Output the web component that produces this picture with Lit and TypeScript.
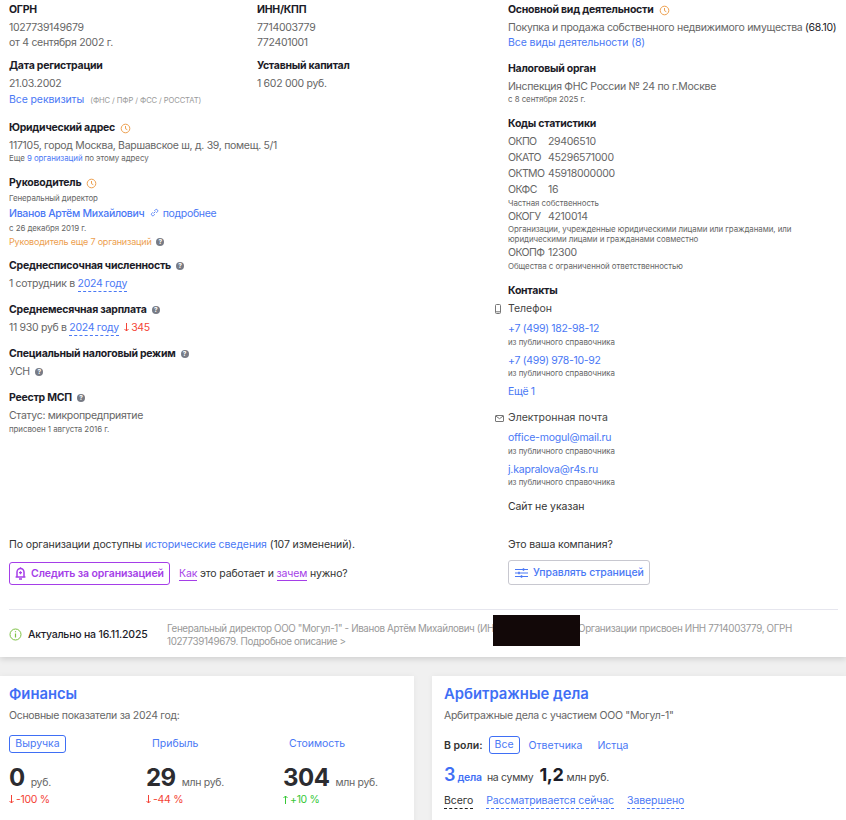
import { LitElement, html, svg, css } from "lit";
import { customElement } from "lit/decorators.js";

const clock = html`<svg class="ico" width="11" height="11" viewBox="0 0 11 11" fill="none" stroke="#eda04f" stroke-width="1"><circle cx="5.5" cy="5.5" r="4.3"/><path d="M5.5 3v2.7l1.8 1"/></svg>`;
const help = html`<span class="help">?</span>`;

// the arrow glyphs of Inter are too wide next to these small figures
const arrow = (up: boolean, color: string) => html`<svg class="arrow" width="5" height="9" viewBox="0 0 5 9" fill="none" stroke=${color} stroke-width="1">${up
  ? svg`<path d="M2.5 9V1M.5 3l2-2 2 2"/>`
  : svg`<path d="M2.5 0v8M.5 6l2 2 2-2"/>`}</svg>`;

@customElement("app-root")
export class AppRoot extends LitElement {
  static styles = css`
    :host {
      display: block;
      height: 820px;
      overflow: hidden;
      background: #f0f0f0;
      font-family: Inter, "Noto Sans", sans-serif;
      font-size: 10.5px;
      letter-spacing: -0.3px;
      color: #666;
    }
    a { color: #4a78f5; text-decoration: none; }
    .top {
      height: 657px;
      padding: 2px 8px 0 9px;
      box-sizing: border-box;
      background: #fff;
      box-shadow: 0 2px 6px rgba(0, 0, 0, 0.14);
    }
    .cols { display: grid; grid-template-columns: 499px 1fr; }
    .reqs { display: grid; grid-template-columns: 248px 1fr; }
    .h { font-size: 10.5px; line-height: 16px; font-weight: 700; letter-spacing: -0.25px; color: #1c1c28; display: flex; align-items: center; gap: 5px; }
    .v { line-height: 14px; margin-top: 3px; white-space: nowrap; }
    .s { font-size: 7.9px; line-height: 10px; letter-spacing: -0.05px; white-space: nowrap; color: #666; }
    .ico { flex: none; }
    .arrow { margin-right: 2px; vertical-align: -1px; }
    .help {
      display: inline-flex;
      align-items: center;
      justify-content: center;
      width: 8px;
      height: 8px;
      border-radius: 50%;
      background: #777b85;
      color: #fff;
      font-size: 6.5px;
      font-weight: 700;
      line-height: 8px;
      vertical-align: 1px;
    }
    .m1 { margin-top: 1px; }
    .m2 { margin-top: 2px; }
    .m4 { margin-top: 4px; }
    .m5 { margin-top: 5px; }
    .m7 { margin-top: 7px; }
    .m8 { margin-top: 8px; }
    .m11 { margin-top: 11px; }
    .m12 { margin-top: 12px; }
    .lk { letter-spacing: -0.1px; }
    .mail { letter-spacing: -0.2px; }
    .dash { border-bottom: 1px dashed #4a78f5; padding-bottom: 1px; }
    .dark { color: #1c1c28; }
    .grey { color: #999; font-size: 7.6px; letter-spacing: -0.1px; margin-left: 6px; }
    .orange { color: #eda04f; font-size: 9px; letter-spacing: -0.2px; }
    .red { color: #f44336; }
    .green { color: #37c837; }
    .code { display: grid; grid-template-columns: 40px 1fr; line-height: 14px; margin-top: 2px; }
    .code.first { margin-top: 3px; }
    .code span:first-child { letter-spacing: -0.6px; }
    .sub { line-height: 16px; letter-spacing: 0; color: #444; display: flex; align-items: center; position: relative; }
    .sub svg { position: absolute; left: -13px; }
    .actions { display: grid; grid-template-columns: 499px 1fr; margin-top: 22px; }
    .q { line-height: 16px; letter-spacing: -0.1px; color: #333; }
    .follow-row { display: flex; align-items: center; gap: 9px; margin-top: 9px; color: #333; letter-spacing: -0.15px; }
    .follow {
      display: flex;
      align-items: center;
      gap: 5px;
      height: 23px;
      width: 161px;
      box-sizing: border-box;
      padding-left: 5px;
      border: 1px solid #a53ee8;
      border-radius: 3px;
      color: #a53ee8;
      font-weight: 600;
      letter-spacing: -0.1px;
      white-space: nowrap;
    }
    .pu { color: #a53ee8; border-bottom: 1px solid #a53ee8; }
    .manage {
      display: flex;
      align-items: center;
      gap: 5px;
      height: 25px;
      width: 142px;
      box-sizing: border-box;
      margin-top: 7px;
      padding-left: 6px;
      border: 1px solid #c8c8d0;
      border-radius: 3px;
      color: #4a78f5;
      font-weight: 500;
      letter-spacing: -0.1px;
      white-space: nowrap;
    }
    .foot {
      display: flex;
      align-items: center;
      position: relative;
      margin-top: 24px;
      height: 48px;
      border-top: 1px solid #e6e6ee;
    }
    .actual { display: flex; align-items: center; gap: 6px; width: 158px; color: #1c1c28; font-weight: 500; letter-spacing: -0.2px; flex: none; }
    .desc { color: #999; line-height: 13px; padding-top: 1px; font-size: 9.8px; letter-spacing: -0.35px; white-space: nowrap; }
    .gap { display: inline-block; width: 84px; }
    .mask { position: absolute; left: 484px; top: 5px; width: 87px; height: 31px; background: #120808; }
    .cards { display: grid; grid-template-columns: 414px 414px; gap: 18px; margin-top: 19px; }
    .card { background: #fff; height: 200px; padding: 9px 12px; box-sizing: border-box; box-shadow: 0 0 6px rgba(0, 0, 0, 0.05); }
    .card.fin { padding-left: 9px; }
    .title { font-size: 14.8px; line-height: 18px; font-weight: 600; letter-spacing: 0; color: #3f6ff5; }
    .desc2 { line-height: 14px; margin-top: 6px; }
    .tabs { display: grid; grid-template-columns: 137px 137px 1fr; margin-top: 12px; height: 18px; align-items: center; }
    .tab { color: #4a78f5; line-height: 16px; letter-spacing: 0; }
    .tab.on { border: 1px solid #3f6ff5; border-radius: 3px; width: 57px; height: 18px; box-sizing: border-box; text-align: center; }
    .tab.off { padding-left: 6px; }
    .nums { display: grid; grid-template-columns: 137px 137px 1fr; margin-top: 11px; }
    .big { font-size: 24px; line-height: 28px; font-weight: 700; letter-spacing: -0.5px; color: #2c2c30; }
    .unit { margin-left: 6px; }
    .pct { line-height: 14px; margin-top: 1px; }
    .role { display: flex; align-items: center; margin-top: 13px; height: 18px; letter-spacing: 0; }
    .role b { font-weight: 600; color: #333; margin-right: 6px; }
    .role .on { border: 1px solid #3f6ff5; border-radius: 3px; width: 31px; height: 18px; box-sizing: border-box; text-align: center; line-height: 16px; color: #4a78f5; margin-right: 9px; }
    .role a { margin-right: 15px; }
    .cases { display: flex; align-items: baseline; margin-top: 9px; line-height: 24px; color: #444; }
    .n { font-size: 18px; font-weight: 700; }
    .cases .blue { color: #3f6ff5; font-weight: 600; }
    .cases .n.d { color: #1c1c28; margin: 0 3px 0 6px; }
    .stat { display: flex; gap: 13px; margin-top: 4px; line-height: 14px; letter-spacing: -0.1px; }
    .stat .all { color: #333; border-bottom: 1px dashed #222; }
    .stat a { border-bottom: 1px dashed #4a78f5; }
  `;

  render() {
    return html`
      <div class="top">
        <div class="cols">
          <div>
            <div class="reqs">
              <div>
                <div class="h">ОГРН</div>
                <div class="v">1027739149679</div>
                <div class="v m1">от 4 сентября 2002 г.</div>
              </div>
              <div>
                <div class="h">ИНН/КПП</div>
                <div class="v">7714003779</div>
                <div class="v m1">772401001</div>
              </div>
              <div class="m8">
                <div class="h">Дата регистрации</div>
                <div class="v">21.03.2002</div>
                <div class="v m2"><a class="lk" href="#">Все реквизиты</a><span class="grey">(ФНС / ПФР / ФСС / РОССТАТ)</span></div>
              </div>
              <div class="m8">
                <div class="h">Уставный капитал</div>
                <div class="v">1 602 000 руб.</div>
              </div>
            </div>

            <div class="h m12">Юридический адрес ${clock}</div>
            <div class="v">117105, город Москва, Варшавское ш, д. 39, помещ. 5/1</div>
            <div class="s">Еще <a href="#">9 организаций</a> по этому адресу</div>

            <div class="h m12">Руководитель ${clock}</div>
            <div class="s m2">Генеральный директор</div>
            <div class="v m4">
              <a href="#" style="font-weight:500">Иванов Артём Михайлович</a>
              <svg width="9" height="9" viewBox="0 0 10 10" fill="none" stroke="#4a78f5" stroke-width="1" style="margin:0 1px 0 3px"><path d="M4 6l2-2M3.2 4.8L1.8 6.2a1.6 1.6 0 0 0 2.2 2.2l1.4-1.4M4.8 3.2l1.4-1.4a1.6 1.6 0 0 1 2.2 2.2L7 5.4"/></svg>
              <a href="#">подробнее</a>
            </div>
            <div class="s m2">с 26 декабря 2019 г.</div>
            <div class="s m4 orange">Руководитель еще 7 организаций &nbsp;${help}</div>

            <div class="h m11">Среднесписочная численность ${help}</div>
            <div class="v">1 сотрудник в <a class="dash" href="#">2024 году</a></div>

            <div class="h m11">Среднемесячная зарплата ${help}</div>
            <div class="v">11 930 руб в <a class="dash" href="#">2024 году</a> &nbsp;<span class="red">${arrow(false, "#f44336")}345</span></div>

            <div class="h m11">Специальный налоговый режим ${help}</div>
            <div class="v">УСН &nbsp;${help}</div>

            <div class="h m11">Реестр МСП ${help}</div>
            <div class="v">Статус: микропредприятие</div>
            <div class="s m1">присвоен 1 августа 2016 г.</div>
          </div>

          <div>
            <div class="h">Основной вид деятельности ${clock}</div>
            <div class="v">Покупка и продажа собственного недвижимого имущества <span class="dark">(68.10)</span></div>
            <div class="v m1"><a class="lk" href="#">Все виды деятельности (8)</a></div>

            <div class="h m11">Налоговый орган</div>
            <div class="v">Инспекция ФНС России № 24 по г.Москве</div>
            <div class="s">с 8 сентября 2025 г.</div>

            <div class="h m12">Коды статистики</div>
            <div class="code first"><span>ОКПО</span><span>29406510</span></div>
            <div class="code"><span>ОКАТО</span><span>45296571000</span></div>
            <div class="code"><span>ОКТМО</span><span>45918000000</span></div>
            <div class="code"><span>ОКФС</span><span>16</span></div>
            <div class="s m1">Частная собственность</div>
            <div class="code"><span>ОКОГУ</span><span>4210014</span></div>
            <div class="s">Организации, учрежденные юридическими лицами или гражданами, или<br />юридическими лицами и гражданами совместно</div>
            <div class="code"><span>ОКОПФ</span><span>12300</span></div>
            <div class="s m1">Общества с ограниченной ответственностью</div>

            <div class="h m12">Контакты</div>
            <div class="sub m2">
              <svg width="6" height="10" viewBox="0 0 6 10" fill="none" stroke="#777" stroke-width="1"><rect x=".5" y=".5" width="5" height="9" rx="1"/><path d="M.5 7.8h5"/></svg>
              Телефон
            </div>
            <div class="v m5"><a href="#">+7 (499) 182-98-12</a></div>
            <div class="s m1">из публичного справочника</div>
            <div class="v m7"><a href="#">+7 (499) 978-10-92</a></div>
            <div class="s">из публичного справочника</div>
            <div class="v m7"><a href="#">Ещё 1</a></div>
            <div class="sub m11">
              <svg width="9" height="7" viewBox="0 0 9 7" fill="none" stroke="#777" stroke-width="1"><rect x=".5" y=".5" width="8" height="6" rx=".5"/><path d="M1 1.2l3.5 2.5L8 1.2"/></svg>
              Электронная почта
            </div>
            <div class="v m5 mail"><a href="#">office-mogul@mail.ru</a></div>
            <div class="s m1">из публичного справочника</div>
            <div class="v m7 mail"><a href="#">j.kapralova@r4s.ru</a></div>
            <div class="s">из публичного справочника</div>
            <div class="q m12">Сайт не указан</div>
          </div>
        </div>

        <div class="actions">
          <div>
            <div class="q">По организации доступны <a href="#">исторические сведения</a> (107 изменений).</div>
            <div class="follow-row">
              <div class="follow">
                <svg width="11" height="13" viewBox="0 0 11 13" fill="none" stroke="#a53ee8" stroke-width="1.5"><path d="M2 9.5V5a3.5 3.5 0 0 1 7 0v4.5M.6 10h9.8M4 12h3M5.5 1.4V.2"/><path d="M5.5 4.2v3M4 5.7h3" stroke-width="1.2"/></svg>
                Следить за организацией
              </div>
              <span><a class="pu" href="#">Как</a> это работает и <a class="pu" href="#">зачем</a> нужно?</span>
            </div>
          </div>
          <div>
            <div class="q">Это ваша компания?</div>
            <div class="manage">
              <svg width="13" height="10" viewBox="0 0 13 10" fill="none" stroke="#4a78f5" stroke-width="1.1"><path d="M0 1.5h13M0 5h13M0 8.5h13"/><path d="M8.5 .3v2.4M4 3.8v2.4M6.5 7.3v2.4" stroke-width="1.5"/></svg>
              Управлять страницей
            </div>
          </div>
        </div>

        <div class="foot">
          <div class="actual">
            <svg width="13" height="13" viewBox="0 0 13 13" fill="none" stroke="#7cc142" stroke-width="1"><circle cx="6.5" cy="6.5" r="5.5"/><path d="M6.5 5.5v4M6.5 3.2v1" stroke-width="1.2"/></svg>
            Актуально на 16.11.2025
          </div>
          <div class="desc">Генеральный директор ООО "Могул-1" - Иванов Артём Михайлович (ИН<span class="gap"></span>Организации присвоен ИНН 7714003779, ОГРН<br />1027739149679. Подробное описание &gt;</div>
          <div class="mask"></div>
        </div>
      </div>

      <div class="cards">
        <div class="card fin">
          <div class="title">Финансы</div>
          <div class="desc2">Основные показатели за 2024 год:</div>
          <div class="tabs">
            <div class="tab on">Выручка</div>
            <div class="tab off">Прибыль</div>
            <div class="tab off">Стоимость</div>
          </div>
          <div class="nums">
            <div><span class="big">0</span><span class="unit">руб.</span><div class="pct red">${arrow(false, "#f44336")}-100 %</div></div>
            <div><span class="big">29</span><span class="unit">млн руб.</span><div class="pct red">${arrow(false, "#f44336")}-44 %</div></div>
            <div><span class="big">304</span><span class="unit">млн руб.</span><div class="pct green">${arrow(true, "#37c837")}+10 %</div></div>
          </div>
        </div>
        <div class="card">
          <div class="title">Арбитражные дела</div>
          <div class="desc2">Арбитражные дела с участием ООО "Могул-1"</div>
          <div class="role">
            <b>В роли:</b>
            <span class="on">Все</span>
            <a href="#">Ответчика</a>
            <a href="#">Истца</a>
          </div>
          <div class="cases">
            <span class="n blue">3</span><span class="blue">&nbsp;дела</span>
            <span>&nbsp;&nbsp;на сумму</span>
            <span class="n d">1,2</span>
            <span>млн руб.</span>
          </div>
          <div class="stat">
            <span class="all">Всего</span>
            <a href="#">Рассматривается сейчас</a>
            <a href="#">Завершено</a>
          </div>
        </div>
      </div>
    `;
  }
}
